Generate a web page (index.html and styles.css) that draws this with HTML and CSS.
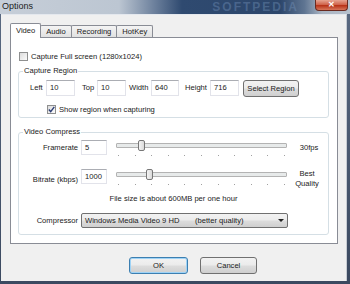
FILE: index.html
```html
<!DOCTYPE html>
<html lang="en">
<head>
    <meta charset="UTF-8">
    <title>Options</title>
    <link rel="stylesheet" href="styles.css">
</head>
<body>

    <div class="window">
        <!-- title bar -->
        <div class="titlebar">
            <span class="title">Options</span>
            <span class="watermark">SOFTPEDIA</span>
            <span class="close">&#x2715;</span>
        </div>

        <div class="client">
            <div class="tabs">
                <div class="tab active">Video</div>
                <div class="tab">Audio</div>
                <div class="tab">Recording</div>
                <div class="tab">HotKey</div>
            </div>

            <div class="panel">
                <div class="check full">
                    <span class="box"></span>
                    <span>Capture Full screen (1280x1024)</span>
                </div>

                <!-- Capture Region -->
                <fieldset class="group region">
                    <legend>Capture Region</legend>
                    <div class="region-row">
                        <span class="lbl lbl-left">Left</span>
                        <span class="field w29">10</span>
                        <span class="lbl lbl-top">Top</span>
                        <span class="field w29">10</span>
                        <span class="lbl lbl-width">Width</span>
                        <span class="field w28">640</span>
                        <span class="lbl lbl-height">Height</span>
                        <span class="field w29">716</span>
                        <span class="btn select-btn">Select Region</span>
                    </div>
                    <div class="check show">
                        <span class="box checked">
                            <svg width="7" height="7" viewBox="0 0 7 7"><path d="M0.8 3.6 L2.7 5.6 L6.3 0.9" fill="none" stroke="#2b3d75" stroke-width="1.4"/></svg>
                        </span>
                        <span>Show region when capturing</span>
                    </div>
                </fieldset>

                <!-- Video Compress -->
                <fieldset class="group compress">
                    <legend>Video Compress</legend>
                    <div class="crow first">
                        <span class="clabel">Framerate</span>
                        <span class="field w26">5</span>
                        <div class="slider">
                            <div class="track"><span class="thumb" style="left: 21px"></span></div>
                            <div class="ticks">
                                <i></i><i></i><i></i><i></i><i></i><i></i><i></i><i></i><i></i><i></i><i></i>
                            </div>
                        </div>
                        <span class="note">30fps</span>
                    </div>
                    <div class="crow second">
                        <span class="clabel">Bitrate (kbps)</span>
                        <span class="field w26">1000</span>
                        <div class="slider">
                            <div class="track"><span class="thumb" style="left: 29px"></span></div>
                            <div class="ticks">
                                <i></i><i></i><i></i><i></i><i></i><i></i><i></i><i></i><i></i><i></i><i></i>
                            </div>
                        </div>
                        <span class="note">Best<br>Quality</span>
                    </div>
                    <div class="filesize">File size is about 600MB per one hour</div>
                    <div class="crow third">
                        <span class="clabel">Compressor</span>
                        <div class="combo">
                            <span class="codec">Windows Media Video 9 HD</span>
                            <span>(better quality)</span>
                            <span class="arrow"></span>
                        </div>
                    </div>
                </fieldset>
            </div>

            <div class="actions">
                <span class="btn ok">OK</span>
                <span class="btn cancel">Cancel</span>
            </div>
        </div>
    </div>

</body>
</html>
```

FILE: styles.css
```css
/* base */
* {
    box-sizing: border-box;
}

body {
    margin: 0;
    width: 350px;
    height: 284px;
    overflow: hidden;
    font-family: 'Liberation Sans', Arial, sans-serif;
    font-size: 7.6px;
    color: #1a1a1a;
}

.window {
    width: 350px;
    height: 284px;
    display: flex;
    flex-direction: column;
    padding-bottom: 3px;
    background: linear-gradient(#5a6a82, #3b4960);
}

/* title bar */
.titlebar {
    height: 14px;
    display: flex;
    align-items: flex-start;
    overflow: hidden;
    background: linear-gradient(90deg, #c6ced8 0%, #bcc6d2 34%, #6d819d 44%, #2f4a70 52%, #2c466b 80%, #5f7592 87%, #aab5c3 92%, #b7c1cd 100%);
}

.title {
    margin-left: 2px;
    font-size: 9px;
    line-height: 13px;
    color: #1c1c1c;
}

.watermark {
    margin-left: auto;
    margin-right: 16px;
    font-size: 12px;
    font-weight: bold;
    letter-spacing: 2px;
    line-height: 14px;
    color: rgba(120, 150, 190, 0.4);
}

.close {
    width: 33px;
    height: 11px;
    margin-right: 2px;
    border: 1px solid #6a2a20;
    border-top: none;
    border-radius: 0 0 4px 4px;
    background: linear-gradient(#e7a491, #d0654d 45%, #b83419 55%, #d7765a);
    color: #fff;
    font-size: 8px;
    font-weight: bold;
    line-height: 10px;
    text-align: center;
}

/* client area */
.client {
    flex: 1;
    margin: 0 3px 0 1px;
    padding: 9px 0 0 9px;
    background-color: #f0f0f0;
    border-top: 1px solid #e4e8ee;
    border-right: 1px solid #c7ccd3;
}

.tabs {
    display: flex;
    align-items: flex-end;
    height: 13px;
}

.tab {
    height: 12px;
    padding: 0 5px;
    margin-left: -1px;
    border: 1px solid #898c95;
    border-bottom: none;
    border-radius: 2px 2px 0 0;
    background: linear-gradient(#f4f4f4, #e1e1e1);
    line-height: 11px;
}

.tab.active {
    height: 15px;
    margin-left: 0;
    margin-bottom: -1px;
    padding: 0 5px;
    background: #fff;
    position: relative;
    z-index: 1;
    line-height: 13px;
}

.panel {
    width: 328px;
    height: 207px;
    border: 1px solid #898c95;
    background-color: #fff;
}

/* checkboxes */
.check {
    display: flex;
    align-items: center;
    height: 9px;
    line-height: 9px;
}

.check .box {
    width: 9px;
    height: 9px;
    margin-right: 3px;
    border: 1px solid #8e8f8f;
    background: linear-gradient(135deg, #dcdcdc, #fbfbfb);
    display: flex;
    align-items: center;
    justify-content: center;
}

.check.full {
    margin: 14px 0 0 8px;
}

/* group boxes */
.group {
    margin: 5px 8px 0 7px;
    padding: 0 0 3px 0;
    border: 1px solid #d5dfe5;
    border-radius: 3px;
    min-width: 0;
}

.group legend {
    margin-left: 4px;
    padding: 0 1px;
    line-height: 10px;
}

.group.compress {
    margin-top: 9px;
    padding-bottom: 6px;
}

.region-row {
    display: flex;
    align-items: flex-start;
    margin-top: 4px;
    padding-left: 11px;
    line-height: 16px;
}

.lbl-left { width: 16px; }
.lbl-top { width: 15px; margin-left: 7px; }
.lbl-width { width: 22px; margin-left: 3px; }
.lbl-height { width: 25px; margin-left: 6px; }

.field {
    height: 16px;
    padding-left: 3px;
    border: 1px solid #e2e3ea;
    border-top-color: #abadb3;
    background: #fff;
    line-height: 14px;
}

.w26 { width: 26px; }
.w28 { width: 28px; }
.w29 { width: 29px; }

.btn {
    display: block;
    height: 17px;
    border: 1px solid #707070;
    border-radius: 3px;
    background: linear-gradient(#f2f2f2 0%, #ebebeb 48%, #dddddd 52%, #cfcfcf 100%);
    text-align: center;
    line-height: 15px;
    color: #1a1a1a;
}

.select-btn {
    width: 56px;
    margin-left: 4px;
}

.check.show {
    margin: 8px 0 0 28px;
}

/* video compress rows */
.crow {
    display: flex;
    align-items: flex-start;
}

.crow.first { margin-top: 3px; }
.crow.second { margin-top: 13px; align-items: center; }
.crow.third { margin-top: 9px; }

.clabel {
    width: 59px;
    margin-right: 3px;
    text-align: right;
    line-height: 15px;
}

.crow .field {
    height: 15px;
    line-height: 13px;
}

.slider {
    width: 171px;
    margin-left: 9px;
    padding-top: 3px;
}

.track {
    height: 5px;
    border: 1px solid #b3b3b3;
    border-radius: 1px;
    background-color: #e7eaea;
    position: relative;
}

.thumb {
    position: absolute;
    top: -4px;
    width: 7px;
    height: 11px;
    border: 1px solid #777;
    border-radius: 2px;
    background: linear-gradient(90deg, #f4f4f4, #dadada);
}

.ticks {
    display: flex;
    justify-content: space-between;
    margin-top: 7px;
    padding: 0 2px;
}

.ticks i {
    width: 1px;
    height: 1px;
    background-color: #a0a0a0;
}

.note {
    width: 24px;
    margin-left: 8px;
    text-align: center;
    line-height: 10px;
}

.crow.first .note {
    line-height: 15px;
    margin-left: 10px;
}

.crow.second .field,
.crow.second .slider {
    align-self: flex-start;
}

.filesize {
    margin-top: 5px;
    text-align: center;
    line-height: 10px;
}

.combo {
    width: 207px;
    height: 15px;
    display: flex;
    align-items: center;
    padding-left: 3px;
    border: 1px solid #707070;
    border-radius: 2px;
    background: linear-gradient(#f2f2f2 0%, #ebebeb 48%, #dddddd 52%, #cfcfcf 100%);
}

.codec {
    width: 110px;
}

.arrow {
    margin-left: auto;
    margin-right: 3px;
    border-left: 3px solid transparent;
    border-right: 3px solid transparent;
    border-top: 3px solid #222;
}

/* bottom buttons */
.actions {
    display: flex;
    margin: 13px 0 0 119px;
}

.ok {
    width: 59px;
    border-color: #3c7fb1;
    box-shadow: inset 0 0 0 1px #9fd3f6;
}

.cancel {
    width: 57px;
    margin-left: 12px;
}
```
